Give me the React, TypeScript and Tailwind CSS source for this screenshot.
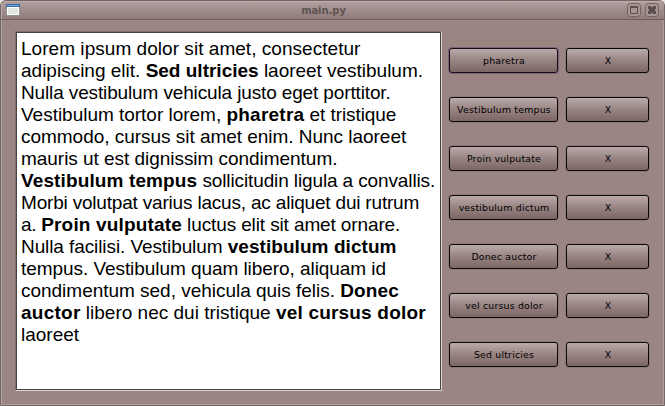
type Run = { t: string; b?: boolean; s?: string };

const lines: Run[][] = [
  [{ t: "Lorem ipsum dolor sit amet, consectetur", s: "tracking-[0.04px]" }],
  [{ t: "adipiscing elit. " }, { t: "Sed ultricies", b: true }, { t: " laoreet vestibulum.", s: "tracking-[-0.02px]" }],
  [{ t: "Nulla vestibulum vehicula justo eget porttitor.", s: "tracking-[-0.135px]" }],
  [
    { t: "Vestibulum tortor lorem, ", s: "tracking-[-0.02px]" },
    { t: "pharetra", b: true, s: "tracking-[0.24px]" },
    { t: " et tristique", s: "tracking-[-0.08px]" },
  ],
  [{ t: "commodo, cursus sit amet enim. Nunc laoreet", s: "tracking-[-0.03px]" }],
  [{ t: "mauris ut est dignissim condimentum.", s: "tracking-[-0.04px]" }],
  [
    { t: "Vestibulum tempus", b: true, s: "tracking-[0.12px]" },
    { t: " sollicitudin ligula a convallis.", s: "tracking-[-0.12px]" },
  ],
  [{ t: "Morbi volutpat varius lacus, ac aliquet dui rutrum", s: "tracking-[-0.19px]" }],
  [
    { t: "a. ", s: "tracking-[-0.3px]" },
    { t: "Proin vulputate", b: true, s: "tracking-[0.16px]" },
    { t: " luctus elit sit amet ornare.", s: "tracking-[-0.12px]" },
  ],
  [
    { t: "Nulla facilisi. Vestibulum ", s: "tracking-[-0.09px]" },
    { t: "vestibulum dictum", b: true, s: "tracking-[0.06px]" },
  ],
  [{ t: "tempus. Vestibulum quam libero, aliquam id", s: "tracking-[-0.06px]" }],
  [
    { t: "condimentum sed, vehicula quis felis. ", s: "tracking-[-0.02px]" },
    { t: "Donec", b: true, s: "tracking-[0.1px]" },
  ],
  [
    { t: "auctor", b: true, s: "tracking-[0.25px]" },
    { t: " libero nec dui tristique " },
    { t: "vel cursus dolor", b: true, s: "tracking-[0.19px]" },
  ],
  [{ t: "laoreet" }],
];

const tags = [
  "pharetra",
  "Vestibulum tempus",
  "Proin vulputate",
  "vestibulum dictum",
  "Donec auctor",
  "vel cursus dolor",
  "Sed ultricies",
];

function PushButton({ label, width, focused }: { label: string; width: string; focused?: boolean }) {
  return (
    <button
      className={`${width} flex h-[25px] items-center justify-center rounded-[3px] border bg-linear-to-b from-[#b9abaa] via-[#988482] to-[#7c6665] pl-px text-[9.4px] leading-none tracking-[0.19px] whitespace-nowrap text-black ${
        focused
          ? "border-[#180c1c] shadow-[0_0_0_1px_#7c6478]"
          : "border-[#0c0808] shadow-[0_0_0_1px_#8f7a79]"
      }`}
    >
      {label}
    </button>
  );
}

function WindowIcon() {
  return (
    <svg width="14" height="12" viewBox="0 0 14 12" shapeRendering="crispEdges">
      <rect width="14" height="12" fill="#8c9389" />
      <rect width="14" height="3" fill="#3c67a5" />
      <rect x="1" y="1" width="12" height="1" fill="#78a5dc" />
      <rect x="1" y="3" width="12" height="8" fill="#fff" />
      <rect x="2" y="4" width="10" height="6" fill="#e3e5df" />
    </svg>
  );
}

function TitleButton({ kind }: { kind: "max" | "close" }) {
  return (
    <svg width="14" height="14" viewBox="0 0 14 14">
      <rect x="0.5" y="0.5" width="13" height="13" rx="3" fill="#a89694" stroke="#74625f" />
      {kind === "max" ? (
        <path d="M3 3h8v8H3zM4 5v5h6V5z" fillRule="evenodd" fill="#5b4e4c" shapeRendering="crispEdges" />
      ) : (
        <path
          d="M3 3h2.5L7 4.5L8.5 3H11v2.5L9.5 7L11 8.5V11H8.5L7 9.5L5.5 11H3V8.5L4.5 7L3 5.5z"
          fill="#5b4e4c"
        />
      )}
    </svg>
  );
}

export default function App() {
  return (
    <div className="h-[406px] w-[665px] overflow-hidden bg-[#e5e1e0] font-['DejaVu_Sans',sans-serif]">
      <div className="flex h-full flex-col overflow-hidden rounded-t-[6px] border border-[#736766] bg-[#9b8583] shadow-[inset_1px_0_0_#b3a3a1,inset_-1px_0_0_#ae9d9b,inset_0_-1px_0_#ae9d9b]">
        <header className="grid h-[19px] shrink-0 grid-cols-[1fr_auto_1fr] items-center border-b border-[#715f5e] bg-linear-to-b from-[#b1a1a0] to-[#8f7a78] px-[5px] shadow-[inset_1px_1px_0_#bcadac]">
          <WindowIcon />
          <h1 className="pr-[18px] font-['DejaVu_Sans_Condensed','DejaVu_Sans',sans-serif] text-[11px] leading-none font-bold text-[#5e5250]">
            main.py
          </h1>
          <div className="flex justify-end gap-1">
            <TitleButton kind="max" />
            <TitleButton kind="close" />
          </div>
        </header>
        <main className="flex items-start pt-[11px] pl-[14px]">
          <div className="h-[360px] w-[427px] shrink-0 border border-t-[#806c6b] border-r-[#ddd5d4] border-b-[#ddd5d4] border-l-[#806c6b]">
            <div className="h-full border border-[#474342] bg-white pt-[5px] pl-[4px] font-['Liberation_Sans',Arial,sans-serif] text-[19px] leading-[22px] text-black">
              {lines.map((runs, i) => (
                <p key={i} className="h-[22px] whitespace-pre">
                  {runs.map((r, j) => (
                    <span key={j} className={`${r.b ? "font-bold" : ""} ${r.s ?? ""}`}>
                      {r.t}
                    </span>
                  ))}
                </p>
              ))}
            </div>
          </div>
          <div className="flex flex-col gap-6 pt-[17px] pl-[7px]">
            {tags.map((tag, i) => (
              <div key={tag} className="flex gap-2">
                <PushButton label={tag} width="w-[109px]" focused={i === 0} />
                <PushButton label="X" width="w-[83px]" />
              </div>
            ))}
          </div>
        </main>
      </div>
    </div>
  );
}
